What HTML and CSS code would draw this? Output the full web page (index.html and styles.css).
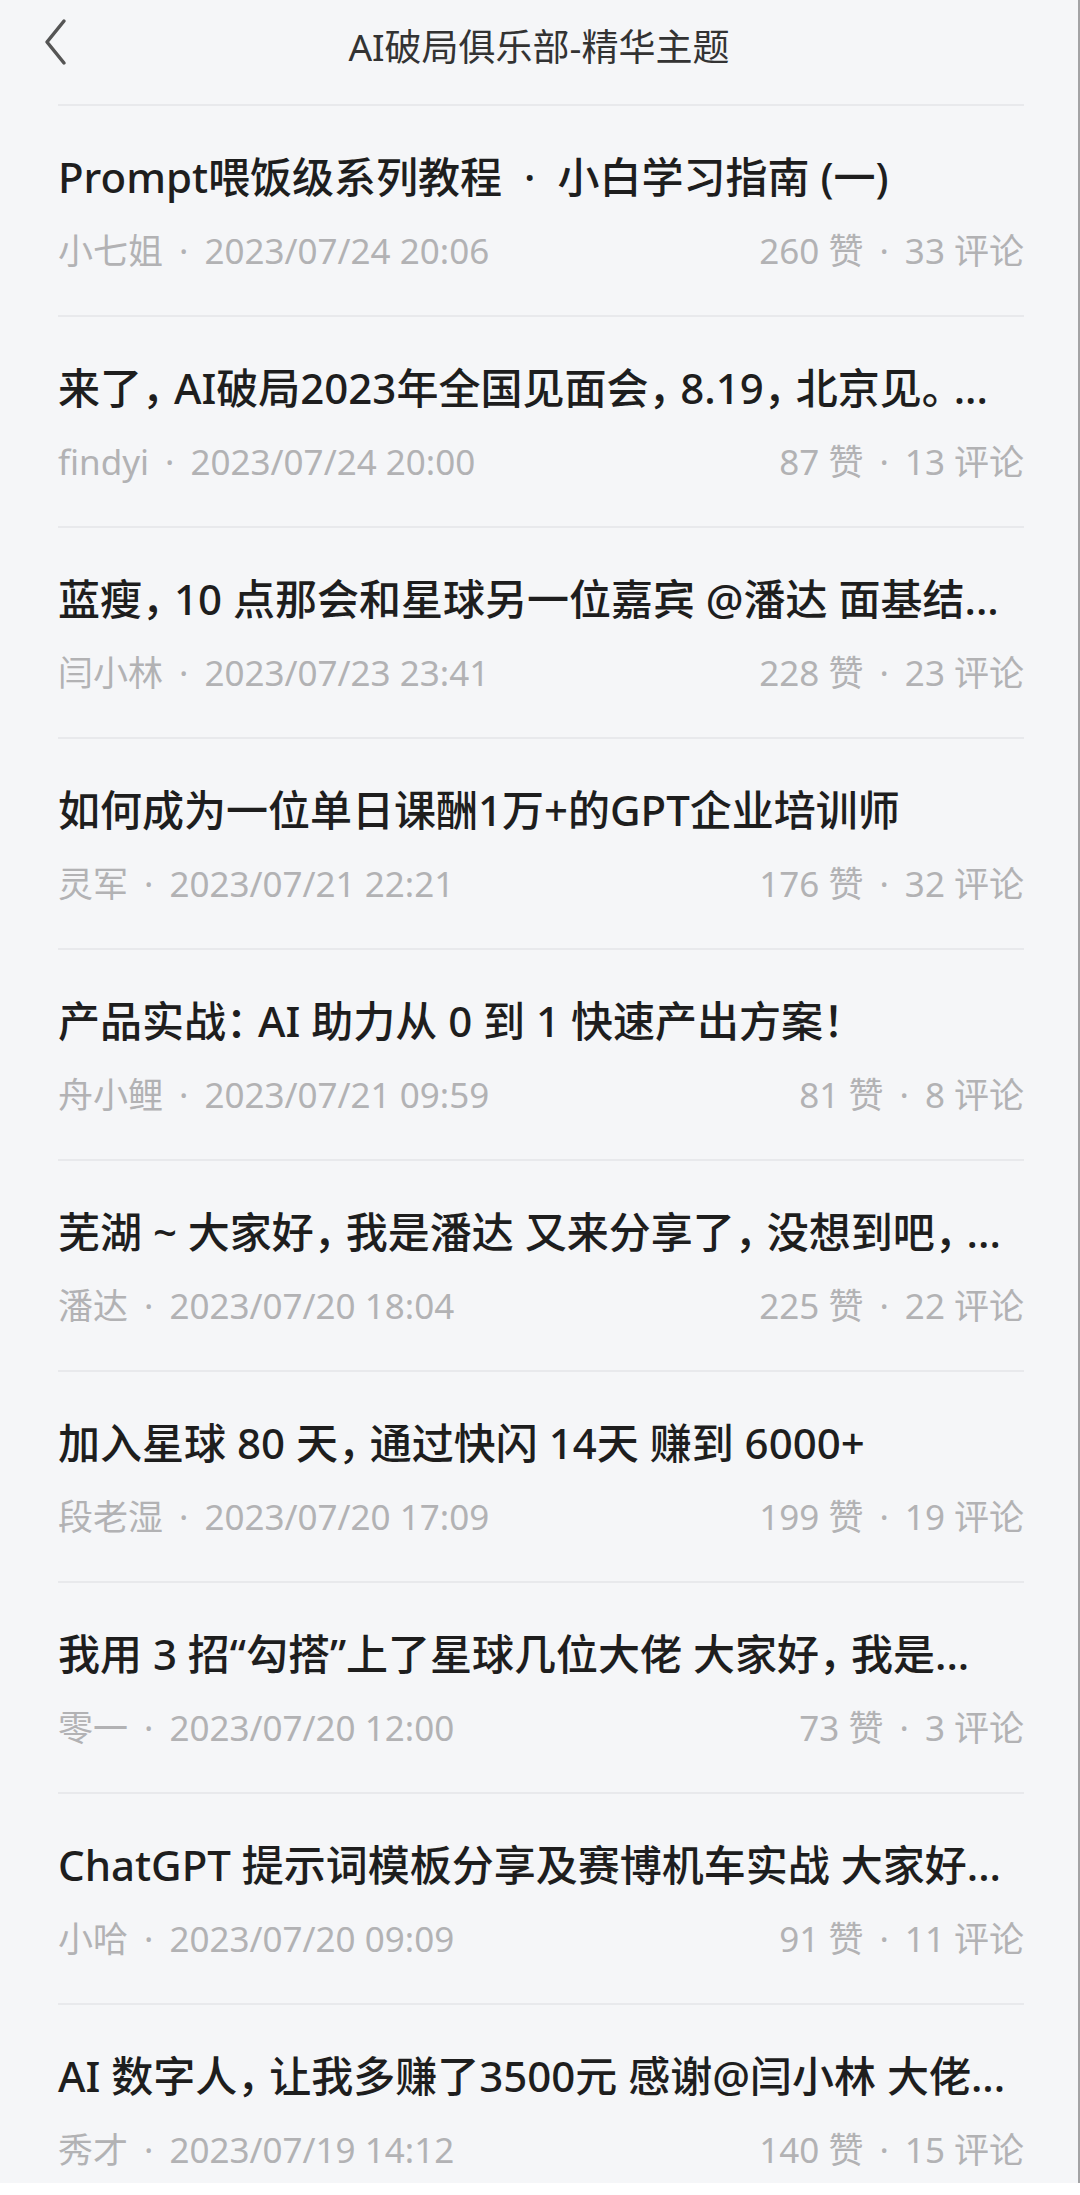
FILE: index.html
```html
<!DOCTYPE html>
<html lang="zh-CN">
<head>
  <meta charset="UTF-8">
  <meta name="viewport" content="width=device-width, initial-scale=1.0">
  <title>AI破局俱乐部-精华主题</title>
  <link rel="stylesheet" href="styles.css">
</head>
<body>
  <div class="page">
    <header class="topbar">
      <a class="back-btn" href="#" aria-label="返回">
        <svg width="24" height="48" viewBox="0 0 24 48">
          <polyline points="20,3 3,24 20,45" fill="none" stroke="#555" stroke-width="3.5" stroke-linecap="round" stroke-linejoin="round"/>
        </svg>
      </a>
      <h1>AI破局俱乐部-精华主题</h1>
    </header>

    <ul class="topic-list">
      <li class="topic">
        <p class="topic-title">Prompt喂饭级系列教程<span class="dot">·</span>小白学习指南 (一)</p>
        <div class="topic-meta">
          <span>小七姐<span class="sep">·</span>2023/07/24 20:06</span>
          <span>260 赞<span class="sep">·</span>33 评论</span>
        </div>
      </li>
      <li class="topic">
        <p class="topic-title">来了， AI破局2023年全国见面会， 8.19， 北京见。 ...</p>
        <div class="topic-meta">
          <span>findyi<span class="sep">·</span>2023/07/24 20:00</span>
          <span>87 赞<span class="sep">·</span>13 评论</span>
        </div>
      </li>
      <li class="topic">
        <p class="topic-title">蓝瘦， 10 点那会和星球另一位嘉宾 @潘达 面基结...</p>
        <div class="topic-meta">
          <span>闫小林<span class="sep">·</span>2023/07/23 23:41</span>
          <span>228 赞<span class="sep">·</span>23 评论</span>
        </div>
      </li>
      <li class="topic">
        <p class="topic-title">如何成为一位单日课酬1万+的GPT企业培训师</p>
        <div class="topic-meta">
          <span>灵军<span class="sep">·</span>2023/07/21 22:21</span>
          <span>176 赞<span class="sep">·</span>32 评论</span>
        </div>
      </li>
      <li class="topic">
        <p class="topic-title">产品实战： AI 助力从 0 到 1 快速产出方案！</p>
        <div class="topic-meta">
          <span>舟小鲤<span class="sep">·</span>2023/07/21 09:59</span>
          <span>81 赞<span class="sep">·</span>8 评论</span>
        </div>
      </li>
      <li class="topic">
        <p class="topic-title">芜湖 ~ 大家好， 我是潘达 又来分享了， 没想到吧， ...</p>
        <div class="topic-meta">
          <span>潘达<span class="sep">·</span>2023/07/20 18:04</span>
          <span>225 赞<span class="sep">·</span>22 评论</span>
        </div>
      </li>
      <li class="topic">
        <p class="topic-title">加入星球 80 天， 通过快闪 14天 赚到 6000+</p>
        <div class="topic-meta">
          <span>段老湿<span class="sep">·</span>2023/07/20 17:09</span>
          <span>199 赞<span class="sep">·</span>19 评论</span>
        </div>
      </li>
      <li class="topic">
        <p class="topic-title">我用 3 招“勾搭”上了星球几位大佬 大家好， 我是...</p>
        <div class="topic-meta">
          <span>零一<span class="sep">·</span>2023/07/20 12:00</span>
          <span>73 赞<span class="sep">·</span>3 评论</span>
        </div>
      </li>
      <li class="topic">
        <p class="topic-title">ChatGPT 提示词模板分享及赛博机车实战 大家好...</p>
        <div class="topic-meta">
          <span>小哈<span class="sep">·</span>2023/07/20 09:09</span>
          <span>91 赞<span class="sep">·</span>11 评论</span>
        </div>
      </li>
      <li class="topic">
        <p class="topic-title">AI 数字人， 让我多赚了3500元 感谢@闫小林 大佬...</p>
        <div class="topic-meta">
          <span>秀才<span class="sep">·</span>2023/07/19 14:12</span>
          <span>140 赞<span class="sep">·</span>15 评论</span>
        </div>
      </li>
    </ul>
  </div>
</body>
</html>
```

FILE: styles.css
```css
/* Reset default styles */
* {
  margin: 0;
  padding: 0;
  box-sizing: border-box;
}

body {
  font-family: "Noto Sans", "Noto Sans CJK SC", sans-serif;
  background-color: #fff;
  color: #222;
}

.page {
  width: 1080px;
  height: 2183px;
  overflow: hidden;
  background-color: #f5f6f8;
  border-right: 2px solid #a3a3a5;
}

/* Top bar */
.topbar {
  position: relative;
  height: 104px;
  display: flex;
  align-items: center;
  justify-content: center;
  padding-bottom: 14px;
}

.back-btn {
  position: absolute;
  left: 44px;
  top: 18px;
  display: block;
}

.topbar h1 {
  font-size: 37px;
  font-weight: 400;
  color: #333;
}

/* Topic list */
.topic-list {
  list-style-type: none;
  margin: 0 54px 0 58px;
}

.topic {
  height: 211px;
  border-top: 2px solid #e8e9ec;
  padding-top: 46px;
}

.topic-title {
  font-size: 42px;
  font-weight: 500;
  line-height: 50px;
  color: #1e1e1e;
  white-space: nowrap;
  font-feature-settings: "halt";
}

.topic-title .dot {
  margin: 0 22px;
}

.topic-meta {
  display: flex;
  justify-content: space-between;
  margin-top: 29px;
  font-size: 35px;
  line-height: 40px;
  color: #b2b2b4;
}

.topic-meta .sep {
  margin: 0 16px;
}
```
